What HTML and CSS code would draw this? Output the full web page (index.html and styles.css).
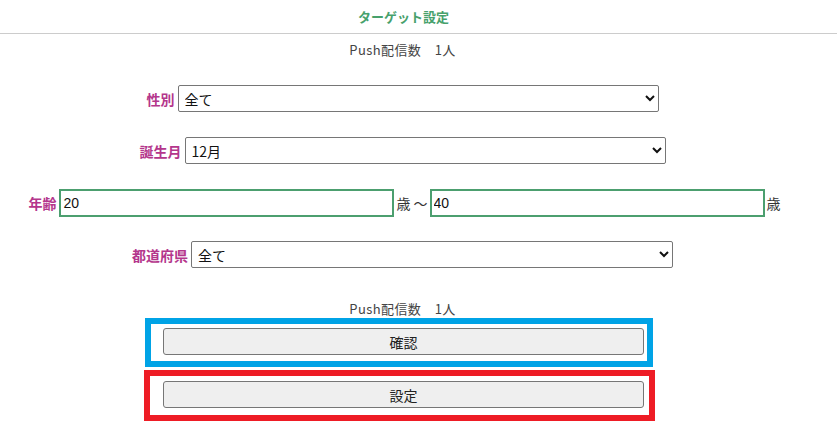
FILE: index.html
```html
<!DOCTYPE html>
<html lang="ja">
<head>
<meta charset="UTF-8">
<meta name="viewport" content="width=device-width, initial-scale=1.0">
<title>ターゲット設定</title>
<link rel="stylesheet" href="styles.css">
</head>
<body>

<div class="header">
  <h1>ターゲット設定</h1>
</div>

<div class="page">
  <p class="count">Push配信数　1人</p>

  <form class="target">
    <label class="row">
      <span class="label">性別</span>
      <select name="gender">
        <option>全て</option>
        <option>男性</option>
        <option>女性</option>
      </select>
    </label>
    <label class="row">
      <span class="label">誕生月</span>
      <select name="month">
        <option>12月</option>
      </select>
    </label>
    <div class="row age">
      <span class="label">年齢</span>
      <input type="text" name="age_from" value="20">
      <span class="unit">歳 ～</span>
      <input type="text" name="age_to" value="40">
      <span class="unit">歳</span>
    </div>
    <label class="row">
      <span class="label">都道府県</span>
      <select name="pref" class="wide">
        <option>全て</option>
      </select>
    </label>

    <p class="count bottom">Push配信数　1人</p>

    <div class="actions">
      <div class="mark blue">
        <input type="button" value="確認">
      </div>
      <div class="mark red">
        <input type="submit" value="設定">
      </div>
    </div>
  </form>
</div>

</body>
</html>
```

FILE: styles.css
```css
body {
  font-family: "Noto Sans CJK JP", "Noto Sans", sans-serif;
  margin: 0;
  padding: 0;
  background-color: #fff;
  color: #333;
}
.header {
  height: 33px;
  border-bottom: 1px solid #ccc;
}
h1 {
  margin: 0;
  text-align: center;
  font-size: 13px;
  line-height: 33px;
  color: #47a16c;
  padding-right: 30px;
}
.page {
  width: 805px;
  padding-bottom: 30px;
}
.count {
  margin: 6px 0 0;
  text-align: center;
  font-size: 13px;
  letter-spacing: 0.4px;
  line-height: 20px;
  color: #444;
}
.target {
  display: flex;
  flex-direction: column;
  align-items: center;
  gap: 25px;
  margin-top: 25px;
}
.row {
  display: flex;
  align-items: center;
  height: 27px;
}
.row.age {
  margin-left: 6px;
}
.label {
  font-size: 14px;
  font-weight: bold;
  color: #b4368c;
  margin-right: 3px;
}
select {
  width: 481px;
  height: 27px;
  font-family: "Noto Sans CJK JP", sans-serif;
  font-size: 14px;
  color: #111;
  border: 1px solid #767676;
  border-radius: 2px;
  background-color: #fff;
  padding: 0 2px;
}
select.wide {
  width: 482px;
}
input[type="text"] {
  width: 335px;
  height: 28px;
  box-sizing: border-box;
  border: 2px solid #4c9f6f;
  padding: 0 2px;
  font-family: "Liberation Sans", Arial, sans-serif;
  font-size: 14px;
  color: #111;
  outline: none;
}
.unit {
  font-size: 14px;
  color: #333;
  margin: 0 2px;
}
.unit:first-of-type {
  margin-right: 3px;
}
.count.bottom {
  margin: 6px 0 0;
}
.actions {
  display: flex;
  flex-direction: column;
  gap: 26px;
  margin-top: -16px;
}
.mark {
  position: relative;
}
.mark::after {
  content: "";
  position: absolute;
  border: 6px solid;
  pointer-events: none;
}
.mark.blue::after {
  border-color: #00a3e6;
  left: -16px;
  right: -9px;
  top: -10px;
  bottom: -12px;
}
.mark.red::after {
  border-color: #ee1c25;
  left: -17px;
  right: -11px;
  top: -11px;
  bottom: -13px;
}
input[type="button"], input[type="submit"] {
  display: block;
  width: 481px;
  height: 27px;
  margin-left: 2px;
  font-family: "Noto Sans CJK JP", sans-serif;
  font-size: 14px;
  color: #222;
  background-color: #efefef;
  border: 1px solid #767676;
  border-radius: 3px;
  cursor: pointer;
}
```
